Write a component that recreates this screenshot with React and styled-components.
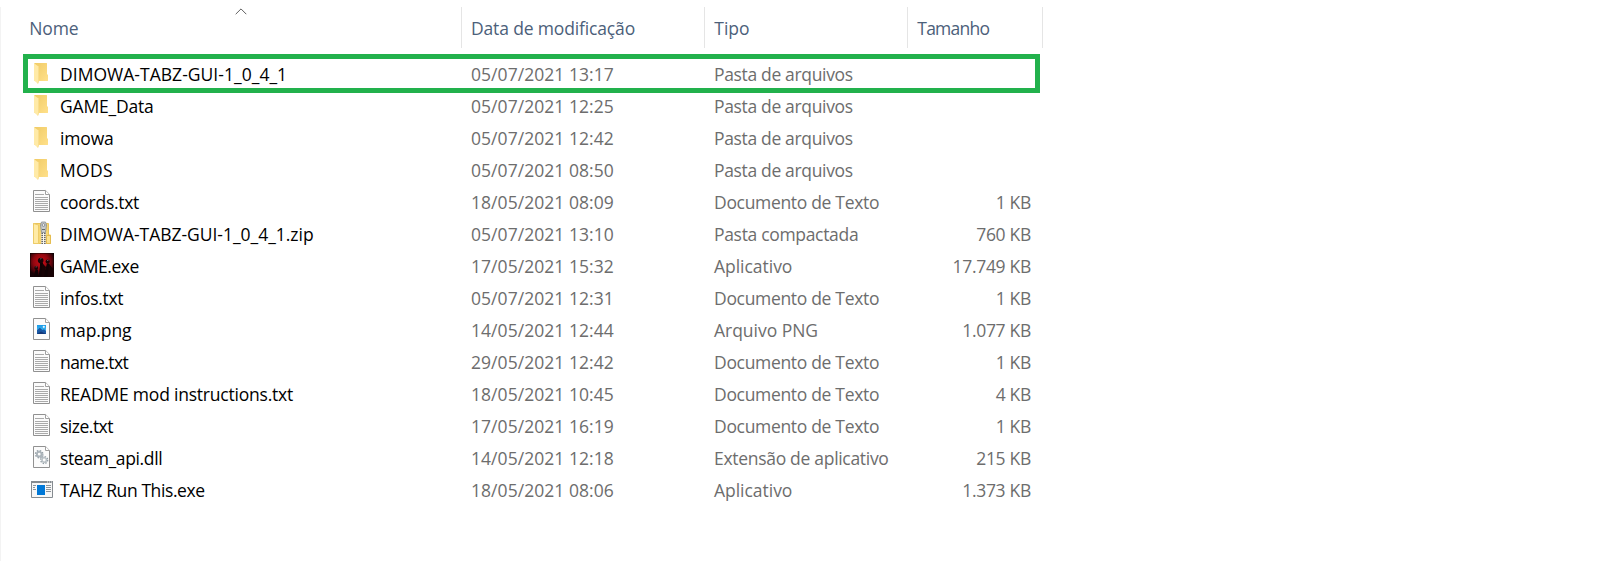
import React from 'react';
import styled, { createGlobalStyle } from 'styled-components';

const GlobalStyle = createGlobalStyle`
  * { box-sizing: border-box; }
  body {
    margin: 0;
    background: #fff;
    font-family: "Open Sans", "Noto Sans", sans-serif;
    font-size: 17.5px;
  }
`;

const Pane = styled.main`
  width: 100%;
  height: 561px;
  padding-top: 7px;
  overflow: hidden;
`;

const Content = styled.div`
  height: 554px;
  border-left: 1px solid #f3f3f3;
`;

const columns = '461px 243px 203px 135px';

const Header = styled.div`
  display: grid;
  grid-template-columns: ${columns};
  width: 1042px;
  height: 41px;
  margin-bottom: 11px;
`;

const HeaderCell = styled.div`
  position: relative;
  display: flex;
  align-items: center;
  padding-left: ${(p) => p.$indent}px;
  border-right: 1px solid #e5e5e5;
  color: #4c607a;
  letter-spacing: ${(p) => p.$tracking || 0}px;
  white-space: nowrap;
`;

const SortArrow = styled.svg`
  position: absolute;
  top: 1px;
  left: 234px;
  width: 12px;
  height: 7px;
`;

const Row = styled.div`
  position: relative;
  display: grid;
  grid-template-columns: ${columns};
  width: 1042px;
  height: 32px;
  line-height: 30px;
`;

const Highlight = styled.div`
  position: absolute;
  top: -5px;
  left: 22px;
  width: 1017px;
  height: 39px;
  border: 5px solid #22b14c;
`;

const NameCell = styled.div`
  display: flex;
  align-items: flex-start;
  gap: 6px;
  padding-left: 29px;
`;

const FileIcon = styled.svg`
  flex: none;
  width: 24px;
  height: 24px;
  margin-top: 2px;
`;

const Text = styled.span`
  color: ${(p) => p.$color || '#6d6d6d'};
  letter-spacing: ${(p) => p.$tracking || 0}px;
  white-space: nowrap;
`;

const Cell = styled.div`
  padding-left: ${(p) => p.$indent}px;
`;

const SizeCell = styled.div`
  padding-right: 12px;
  text-align: right;
`;

function Folder() {
  return (
    <FileIcon viewBox="0 0 24 24">
      <defs>
        <linearGradient id="folderBack" x1="0" x2="1" y1="0" y2="1">
          <stop offset="0" stopColor="#f0cb66" />
          <stop offset="1" stopColor="#ffe08a" />
        </linearGradient>
      </defs>
      <path d="M4.3 2H16.6Q17 2 17 2.5V13L18 14V19.4Q18 20 17.4 20H4.3Z" fill="url(#folderBack)" />
      <path d="M4 2.2L8.6 5.4Q9 5.8 9 6.4V20L8 22.8L4.4 19.8Q4 19.4 4 19Z" fill="#ffeaa7" />
      <path d="M8.5 6V20.4L7.8 22.6" fill="none" stroke="#f7d982" strokeWidth=".7" />
    </FileIcon>
  );
}

function Page() {
  return (
    <>
      <path d="M3.5 1.5H15.6L19.5 5.4V22.5H3.5Z" fill="#fbfbfb" stroke="#919191" />
      <path d="M15.5 1.5V5.5H19.5" fill="#fff" stroke="#a0a0a0" />
    </>
  );
}

function TextFile() {
  return (
    <FileIcon viewBox="0 0 24 24">
      <Page />
      <path
        d="M5 5.5H14M5 8.5H18M5 10.5H18M5 12.5H18M5 14.5H18M5 16.5H18M5 18.5H18M5 20.5H18"
        stroke="#aaa"
      />
    </FileIcon>
  );
}

function ImageFile() {
  return (
    <FileIcon viewBox="0 0 24 24">
      <defs>
        <linearGradient id="sky" x1="0" x2="0" y1="0" y2="1">
          <stop offset="0" stopColor="#1b9be8" />
          <stop offset="1" stopColor="#53c5f3" />
        </linearGradient>
      </defs>
      <Page />
      <rect x="7" y="8" width="9" height="9" fill="url(#sky)" />
      <circle cx="13.8" cy="9.8" r="1.1" fill="#e7f7ff" />
      <path d="M7 13.2L9.8 10.8L12.5 13L14 12.2L16 14V17H7Z" fill="#1858a5" />
      <path d="M7 17L11 14.6L16 17Z" fill="#123779" />
    </FileIcon>
  );
}

function ZipFile() {
  return (
    <FileIcon viewBox="0 0 24 24">
      <path d="M3.5 2.5H18.5V14H20.5V22.5H3.5Z" fill="#f8d773" stroke="#e9c35a" />
      <path d="M3.5 2.5L8.5 4V22.5H3.5Z" fill="#ffeba6" stroke="#edcc69" />
      <path d="M16.5 14.5H20.5V22.5H16.5Z" fill="#fbe18f" stroke="#e5bd50" />
      <path d="M11 11H16V23H11Z" fill="#e4dcc4" />
      <path d="M13.5 12V23" stroke="#555" strokeWidth="4" strokeDasharray="1 1" />
      <path d="M13.5 12V23" stroke="#f7f7f7" strokeWidth="1.2" />
      <path d="M11.5 1H15.5L16.5 4L15.5 11.5H11.5L10.5 4Z" fill="#c8cbcd" stroke="#858b90" strokeWidth=".8" />
      <circle cx="13.5" cy="4" r="1.4" fill="#f4f4f4" stroke="#666d72" strokeWidth=".7" />
      <path d="M12 8.5H15" stroke="#62696e" />
    </FileIcon>
  );
}

function GameApp() {
  return (
    <FileIcon viewBox="0 0 24 24">
      <defs>
        <radialGradient id="redGlow" cx=".46" cy=".36" r=".62">
          <stop offset="0" stopColor="#d00c16" />
          <stop offset=".55" stopColor="#8f0710" />
          <stop offset="1" stopColor="#180206" />
        </radialGradient>
      </defs>
      <rect width="24" height="24" fill="#0b0203" />
      <rect x=".5" y=".5" width="23" height="23" fill="url(#redGlow)" />
      <path
        d="M4 24L5 18L6 16L8 17L8.5 24ZM8.6 24L10 13L10 9.5H12.8L14 14L14.5 24ZM13 24L16 14L17 10.5H19L21 15L24 18V24Z"
        fill="#100204"
      />
      <path d="M12 10L16 14L14 24H11ZM19 11L24 17V24H17Z" fill="#170205" />
      <circle cx="10.7" cy="7.6" r="2.8" fill="#180306" />
      <circle cx="17.7" cy="8.6" r="2.1" fill="#180306" />
      <circle cx="6.2" cy="14.9" r="1.9" fill="#180306" />
      <path d="M10 6L11.5 5.5M17 7.5L18.5 7.2M5.5 14L7 13.8" stroke="#75666d" strokeWidth=".8" />
    </FileIcon>
  );
}

function LibraryFile() {
  return (
    <FileIcon viewBox="0 0 24 24">
      <Page />
      <g fill="none" stroke="#929da5">
        <circle cx="9.2" cy="9.2" r="3.5" strokeWidth="1.7" strokeDasharray="1.5 1.25" />
        <circle cx="9.2" cy="9.2" r="2.3" strokeWidth="1.8" stroke="#aab3b9" />
        <circle cx="14.2" cy="15" r="3.4" strokeWidth="1.5" strokeDasharray="1.4 1.27" />
        <circle cx="14.2" cy="15" r="2.2" strokeWidth="1.5" stroke="#b8c0c5" />
      </g>
    </FileIcon>
  );
}

function WindowApp() {
  return (
    <FileIcon viewBox="0 0 24 24">
      <path d="M1.5 4.5H22.5V20.5H1.5Z" fill="#f7f7f7" stroke="#858b90" />
      <path d="M1 5H23" stroke="#858b90" strokeWidth="2" />
      <path d="M17 5H18M19 5H20M21 5H22" stroke="#e9ebec" />
      <path d="M3 8.5H6M3 10.5H5M3 12.5H6M16 8.5H21M16 10.5H21M16 12.5H21M16 14.5H21" stroke="#8d9499" />
      <rect x="7" y="8" width="8" height="10" fill="#0078d7" />
    </FileIcon>
  );
}

const types = {
  folder: { label: 'Pasta de arquivos', tracking: -0.34 },
  text: { label: 'Documento de Texto', tracking: -0.32 },
  zip: { label: 'Pasta compactada', tracking: -0.32 },
  app: { label: 'Aplicativo', tracking: -0.03 },
  png: { label: 'Arquivo PNG', tracking: -0.03 },
  dll: { label: 'Extensão de aplicativo', tracking: -0.3 },
};

const files = [
  { name: 'DIMOWA-TABZ-GUI-1_0_4_1', tracking: 0.03, icon: Folder, date: '05/07/2021 13:17', type: 'folder', highlighted: true },
  { name: 'GAME_Data', tracking: -0.2, icon: Folder, date: '05/07/2021 12:25', type: 'folder' },
  { name: 'imowa', tracking: -0.15, icon: Folder, date: '05/07/2021 12:42', type: 'folder' },
  { name: 'MODS', tracking: 0.3, icon: Folder, date: '05/07/2021 08:50', type: 'folder' },
  { name: 'coords.txt', tracking: -0.28, icon: TextFile, date: '18/05/2021 08:09', type: 'text', size: '1 KB' },
  { name: 'DIMOWA-TABZ-GUI-1_0_4_1.zip', tracking: -0.03, icon: ZipFile, date: '05/07/2021 13:10', type: 'zip', size: '760 KB' },
  { name: 'GAME.exe', tracking: -0.47, icon: GameApp, date: '17/05/2021 15:32', type: 'app', size: '17.749 KB' },
  { name: 'infos.txt', tracking: -0.32, icon: TextFile, date: '05/07/2021 12:31', type: 'text', size: '1 KB' },
  { name: 'map.png', tracking: -0.1, icon: ImageFile, date: '14/05/2021 12:44', type: 'png', size: '1.077 KB' },
  { name: 'name.txt', tracking: -0.57, icon: TextFile, date: '29/05/2021 12:42', type: 'text', size: '1 KB' },
  { name: 'README mod instructions.txt', tracking: -0.21, icon: TextFile, date: '18/05/2021 10:45', type: 'text', size: '4 KB' },
  { name: 'size.txt', tracking: -0.5, icon: TextFile, date: '17/05/2021 16:19', type: 'text', size: '1 KB' },
  { name: 'steam_api.dll', tracking: -0.36, icon: LibraryFile, date: '14/05/2021 12:18', type: 'dll', size: '215 KB' },
  { name: 'TAHZ Run This.exe', tracking: -0.4, icon: WindowApp, date: '18/05/2021 08:06', type: 'app', size: '1.373 KB' },
];

function FileRow({ file }) {
  const Icon = file.icon;
  const type = types[file.type];
  return (
    <Row>
      <NameCell>
        <Icon />
        <Text $color="#000" $tracking={file.tracking}>{file.name}</Text>
      </NameCell>
      <Cell $indent={9}>
        <Text $tracking={0.05}>{file.date}</Text>
      </Cell>
      <Cell $indent={9}>
        <Text $tracking={type.tracking}>{type.label}</Text>
      </Cell>
      <SizeCell>
        <Text $tracking={-0.3}>{file.size}</Text>
      </SizeCell>
      {file.highlighted && <Highlight />}
    </Row>
  );
}

export default function App() {
  return (
    <Pane>
      <GlobalStyle />
      <Content>
        <Header>
          <HeaderCell $indent={28.3} $tracking={-0.15}>
            Nome
            <SortArrow viewBox="0 0 12 7">
              <path d="M.7 6.2L6 .9L11.3 6.2" fill="none" stroke="#5f5f5f" />
            </SortArrow>
          </HeaderCell>
          <HeaderCell $indent={9} $tracking={-0.15}>Data de modificação</HeaderCell>
          <HeaderCell $indent={9.3}>Tipo</HeaderCell>
          <HeaderCell $indent={9.3} $tracking={-0.77}>Tamanho</HeaderCell>
        </Header>
        {files.map((file) => (
          <FileRow key={file.name} file={file} />
        ))}
      </Content>
    </Pane>
  );
}
